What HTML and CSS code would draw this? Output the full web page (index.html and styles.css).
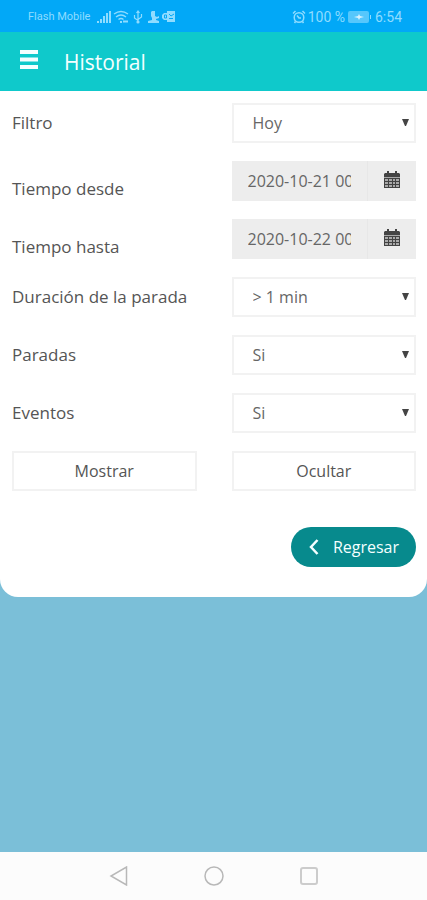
FILE: index.html
```html
<!DOCTYPE html>
<html lang="es">
<head>
<meta charset="utf-8">
<meta name="viewport" content="width=device-width, initial-scale=1">
<title>Historial</title>
<link rel="stylesheet" href="styles.css">
</head>
<body>
<div class="status">
  <div class="status-group">
    <span class="carrier">Flash Mobile</span>
    <svg class="signal" width="15" height="14" viewBox="0 0 15 14" fill="currentColor"><path d="M0 11h2v2H0zM3 9h2v4H3zM6 6h2v7H6zM9 3h2v10H9zM12 1h2v12h-2z"/></svg>
    <svg width="16" height="14" viewBox="0 0 16 14" fill="none" stroke="currentColor" stroke-width="1.4"><path d="M1 4Q8-1 15 4M3 7q5-4 10 0M5.500 9.500q2.500-2 5 0"/><path d="M7 12h2M10 11.500h5" stroke-width="2"/></svg>
    <svg width="16" height="14" viewBox="0 0 16 14" fill="none" stroke="currentColor" stroke-width="1.200"><path d="M8 1v12M4.500 5v3L8 10.500M11.500 4v3L8 9.500M6.500 3 8 1l1.500 2"/><circle cx="8" cy="12" r="1" fill="currentColor"/></svg>
    <svg width="14" height="14" viewBox="0 0 14 14" fill="currentColor"><path d="M5 1h3v5l2 1 2-1v2l-3 1v1l3 1v2H1v-2l4-1V8L4 6V2z"/></svg>
    <svg width="14" height="14" viewBox="0 0 14 14"><path fill="currentColor" d="M5 1h8v11H5v-2H2L0 8V5l2-2h3z"/><path fill="none" stroke="#02a8f7" d="M2.500 5v3h2V5zM7 4l2 2 3-2M7 8.500h4"/></svg>
  </div>
  <div class="status-group battery-group">
    <svg width="14" height="14" viewBox="0 0 14 14" fill="none" stroke="currentColor" stroke-width="1.500"><circle cx="7" cy="7.500" r="4.800"/><path d="M1 3.500 3.500 1M13 3.500 10.500 1M5 5.500l2 2.500h2M3.500 11.500 2.500 13M10.500 11.500l1 1.500"/></svg>
    <span class="percent">100 %</span>
    <svg class="battery" width="26" height="12" viewBox="0 0 26 12"><rect x="1" y="0" width="21" height="12" rx="2" fill="currentColor" opacity=".6"/><path d="M23 4h1v4h-1z" fill="currentColor"/><path d="m7 6 4-1 1-2 1 2 4 1-4 1-1 2-1-2z" fill="#d6f2ff"/></svg>
    <span class="clock">6:54</span>
  </div>
</div>

<header class="header">
  <button class="menu" type="button" aria-label="Menú">
    <svg width="18" height="19" viewBox="0 0 18 19" fill="currentColor"><path d="M0 0h18v4H0zM0 7.500h18v4H0zM0 15h18v4H0z"/></svg>
  </button>
  <h1 class="title">Historial</h1>
</header>

<main class="panel">
  <form class="filters">
    <label for="filtro">Filtro</label>
    <div class="select-box">
      <select id="filtro"><option>Hoy</option></select>
      <svg class="arrow" width="7" height="7" viewBox="0 0 7 7"><path d="M0 0h7L4 7H3z"/></svg>
    </div>

    <label class="date-label" for="desde">Tiempo desde</label>
    <div class="date-box">
      <div class="date-field"><input id="desde" type="text" value="2020-10-21 00:00" readonly></div>
      <button class="calendar" type="button" aria-label="Elegir fecha desde">
        <svg width="16" height="17" viewBox="0 0 16 17"><path fill="#444" d="M1 2h2V0h2v2h6V0h2v2h2l1 1v3H0V3z"/><path fill="#444" fill-rule="evenodd" d="M0 7h16v10H0zM1 8v2h3V8zM5 8v2h3V8zM9 8v2h2V8zM12 8v2h3V8zM1 11v2h3v-2zM5 11v2h3v-2zM9 11v2h2v-2zM12 11v2h3v-2zM1 14v2h3v-2zM5 14v2h3v-2zM9 14v2h2v-2zM12 14v2h3v-2z"/><path fill="#444" opacity=".4" d="M0 6h16v11H0z"/></svg>
      </button>
    </div>

    <label class="date-label" for="hasta">Tiempo hasta</label>
    <div class="date-box">
      <div class="date-field"><input id="hasta" type="text" value="2020-10-22 00:00" readonly></div>
      <button class="calendar" type="button" aria-label="Elegir fecha hasta">
        <svg width="16" height="17" viewBox="0 0 16 17"><path fill="#444" d="M1 2h2V0h2v2h6V0h2v2h2l1 1v3H0V3z"/><path fill="#444" fill-rule="evenodd" d="M0 7h16v10H0zM1 8v2h3V8zM5 8v2h3V8zM9 8v2h2V8zM12 8v2h3V8zM1 11v2h3v-2zM5 11v2h3v-2zM9 11v2h2v-2zM12 11v2h3v-2zM1 14v2h3v-2zM5 14v2h3v-2zM9 14v2h2v-2zM12 14v2h3v-2z"/><path fill="#444" opacity=".4" d="M0 6h16v11H0z"/></svg>
      </button>
    </div>

    <label for="duracion">Duración de la parada</label>
    <div class="select-box">
      <select id="duracion"><option>&gt; 1 min</option></select>
      <svg class="arrow" width="7" height="7" viewBox="0 0 7 7"><path d="M0 0h7L4 7H3z"/></svg>
    </div>

    <label for="paradas">Paradas</label>
    <div class="select-box">
      <select id="paradas"><option>Si</option></select>
      <svg class="arrow" width="7" height="7" viewBox="0 0 7 7"><path d="M0 0h7L4 7H3z"/></svg>
    </div>

    <label for="eventos">Eventos</label>
    <div class="select-box">
      <select id="eventos"><option>Si</option></select>
      <svg class="arrow" width="7" height="7" viewBox="0 0 7 7"><path d="M0 0h7L4 7H3z"/></svg>
    </div>

    <button class="action" type="button">Mostrar</button>
    <button class="action" type="button">Ocultar</button>
  </form>
  <div class="footer">
    <button class="back" type="button">
      <svg width="10" height="16" viewBox="0 0 10 16" fill="none" stroke="currentColor" stroke-width="2.500"><path d="M8.500 1 2 8l6.500 7"/></svg>
      Regresar
    </button>
  </div>
</main>

<nav class="system-nav">
  <button type="button" aria-label="Atrás"><svg width="20" height="20" viewBox="0 0 20 20"><path d="M17.500 1v18L2 10z"/></svg></button>
  <button type="button" aria-label="Inicio"><svg width="20" height="20" viewBox="0 0 20 20"><circle cx="10" cy="10" r="9"/></svg></button>
  <button type="button" aria-label="Recientes"><svg class="recents" width="20" height="20" viewBox="0 0 20 20"><rect x="2" y="2" width="16" height="16" rx="2"/></svg></button>
</nav>
</body>
</html>
```
FILE: styles.css
```css
* {
  box-sizing: border-box;
}

body {
  margin: 0;
  min-height: 100vh;
  display: flex;
  flex-direction: column;
  background: #7bbfd8;
  color: #555;
  font: 16px/24px "Open Sans", sans-serif;
}

button,
input,
select {
  margin: 0;
  padding: 0;
  border: 0;
  border-radius: 0;
  background: none;
  color: inherit;
  font: inherit;
}

svg {
  display: block;
  flex: none;
}

.status {
  display: flex;
  align-items: center;
  justify-content: space-between;
  height: 32px;
  padding: 2px 25px 0 28px;
  background: #02a8f7;
  color: #8fdcff;
  font-family: Roboto, sans-serif;
}

.status-group {
  display: flex;
  align-items: center;
  gap: 1px;
}

.carrier {
  font-size: 11px;
}

.signal {
  margin-left: 6px;
}

.battery-group {
  gap: 2px;
}

.percent,
.clock {
  font-size: 14px;
}

.header {
  display: flex;
  align-items: center;
  gap: 26px;
  height: 59px;
  padding: 0 20px;
  background: #0fc9cb;
  color: #f4ffff;
}

.menu {
  padding-bottom: 4px;
}

.title {
  margin: 0;
  font-size: 21px;
  font-weight: 400;
}

.panel {
  padding: 12px 11px 30px 12px;
  border-radius: 0 0 18px 18px;
  background: #fff;
}

.filters {
  display: grid;
  grid-template-columns: 1fr 1fr;
  grid-auto-rows: 40px;
  align-items: center;
  gap: 18px 35px;
}

.filters label {
  font-size: 17px;
  white-space: nowrap;
}

.filters .date-label {
  padding-top: 16px;
}

.select-box {
  position: relative;
}

.select-box select {
  width: 100%;
  height: 40px;
  padding: 0 32px 0 19px;
  border: 2px solid #f2f2f2;
  background: #fff;
  color: #666;
  appearance: none;
}

.arrow {
  position: absolute;
  top: 16px;
  right: 7px;
  fill: #444;
  pointer-events: none;
}

.date-box {
  display: flex;
  height: 40px;
  background: #ededed;
}

.date-field {
  flex: 1;
  min-width: 0;
  padding: 0 16px;
  border-right: 1px solid #e7e7e7;
}

.date-field input {
  display: block;
  width: 100%;
  height: 40px;
  color: #666;
}

.calendar {
  display: flex;
  justify-content: center;
  align-items: center;
  width: 48px;
  padding-bottom: 3px;
}

.action {
  height: 40px;
  border: 2px solid #f2f2f2;
  background: #fff;
}

.footer {
  display: flex;
  justify-content: flex-end;
  padding-top: 36px;
}

.back {
  display: flex;
  align-items: center;
  gap: 14px;
  height: 40px;
  padding: 0 17px 0 18px;
  border-radius: 20px;
  background: #078a8d;
  color: #f4ffff;
}

.system-nav {
  display: flex;
  align-items: center;
  justify-content: center;
  gap: 75px;
  height: 48px;
  margin-top: auto;
  background: #fcfcfc;
}

.system-nav svg {
  fill: none;
  stroke: #b8b8b8;
  stroke-width: 1.5;
}

.system-nav .recents {
  stroke: #ccc;
  stroke-width: 2;
}
```
